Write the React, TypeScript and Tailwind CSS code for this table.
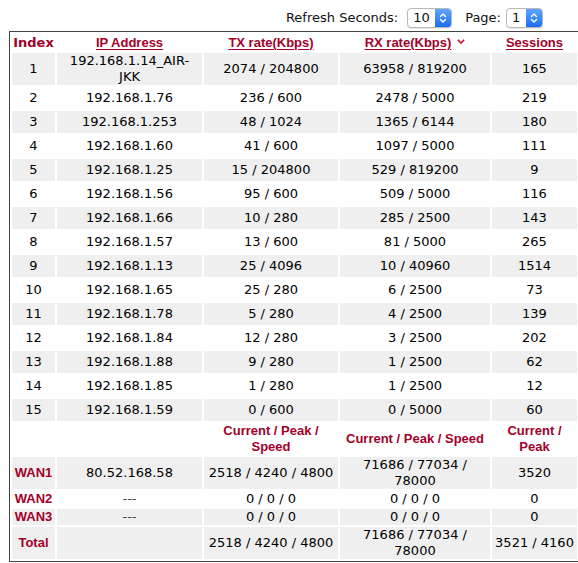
import React from "react";

const RED = "text-[#a3002a]";

const rows: [number, React.ReactNode, string, string, string][] = [
  [1, <>192.168.1.14_AIR-<br />JKK</>, "2074 / 204800", "63958 / 819200", "165"],
  [2, "192.168.1.76", "236 / 600", "2478 / 5000", "219"],
  [3, "192.168.1.253", "48 / 1024", "1365 / 6144", "180"],
  [4, "192.168.1.60", "41 / 600", "1097 / 5000", "111"],
  [5, "192.168.1.25", "15 / 204800", "529 / 819200", "9"],
  [6, "192.168.1.56", "95 / 600", "509 / 5000", "116"],
  [7, "192.168.1.66", "10 / 280", "285 / 2500", "143"],
  [8, "192.168.1.57", "13 / 600", "81 / 5000", "265"],
  [9, "192.168.1.13", "25 / 4096", "10 / 40960", "1514"],
  [10, "192.168.1.65", "25 / 280", "6 / 2500", "73"],
  [11, "192.168.1.78", "5 / 280", "4 / 2500", "139"],
  [12, "192.168.1.84", "12 / 280", "3 / 2500", "202"],
  [13, "192.168.1.88", "9 / 280", "1 / 2500", "62"],
  [14, "192.168.1.85", "1 / 280", "1 / 2500", "12"],
  [15, "192.168.1.59", "0 / 600", "0 / 5000", "60"],
];

function Select({ value, width }: { value: string; width: string }) {
  return (
    <div
      className={`flex h-[20px] ${width} rounded-[4px] border border-[#b9b9b9] bg-white shadow-[0_1px_1px_rgba(0,0,0,0.08)] overflow-hidden`}
    >
      <div className="flex-1 pl-[5px] text-[13px] leading-[18px] text-[#111]">{value}</div>
      <div className="flex w-[16px] items-center justify-center bg-gradient-to-b from-[#5fa6fc] to-[#1b6cf0]">
        <svg width="8" height="12" viewBox="0 0 8 12" fill="none">
          <path d="M1.5 4.5 L4 2 L6.5 4.5" stroke="white" strokeWidth="1.4" strokeLinecap="round" strokeLinejoin="round" />
          <path d="M1.5 7.5 L4 10 L6.5 7.5" stroke="white" strokeWidth="1.4" strokeLinecap="round" strokeLinejoin="round" />
        </svg>
      </div>
    </div>
  );
}

const linkCls = `font-['Liberation_Sans',Arial,sans-serif] font-bold text-[13px] ${RED} underline underline-offset-[2px] decoration-[1px]`;
const redBold = `font-['Liberation_Sans',Arial,sans-serif] font-bold text-[13px] ${RED}`;

export default function App() {
  return (
    <div className="w-[578px] h-[563px] overflow-hidden bg-white font-['DejaVu_Sans',Verdana,sans-serif] text-[13px] text-black">
      <div className="flex h-[31px] items-start justify-end pr-[35px] pt-[8px]">
        <div className="flex h-[20px] items-center">
          <span className="text-[13px] text-[#111]">Refresh Seconds:</span>
          <div className="ml-[9px]">
            <Select value="10" width="w-[45px]" />
          </div>
          <span className="ml-[13px] text-[13px] text-[#111]">Page:</span>
          <div className="ml-[5px]">
            <Select value="1" width="w-[37px]" />
          </div>
        </div>
      </div>
      <table className="ml-[9px] w-[571px] table-fixed border-separate border-spacing-[2px] border border-[#444] leading-[16px]">
        <thead>
          <tr className="h-[17px]">
            <th className={`w-[43px] p-0 font-['DejaVu_Sans',Verdana,sans-serif] font-bold text-[13px] ${RED}`}>Index</th>
            <th className="w-[145px] p-0"><span className={linkCls}>IP Address</span></th>
            <th className="w-[134px] p-0"><span className={linkCls}>TX rate(Kbps)</span></th>
            <th className="w-[150px] p-0">
              <span className={linkCls}>RX rate(Kbps)</span>
              <svg className="ml-[6px] inline-block align-[3px]" width="8" height="5" viewBox="0 0 8 5">
                <path d="M0.8 0.8 L4 4 L7.2 0.8" stroke="#d0002f" strokeWidth="1.6" fill="none" />
              </svg>
            </th>
            <th className="w-[85px] p-0"><span className={linkCls}>Sessions</span></th>
          </tr>
        </thead>
        <tbody>
          {rows.map(([i, ip, tx, rx, s]) => (
            <tr key={i} className={i % 2 === 1 ? "bg-[#efefef]" : "bg-white"}>
              <td className="h-[22px] p-0 text-center align-middle">{i}</td>
              <td className="h-[22px] p-0 text-center align-middle">{ip}</td>
              <td className="h-[22px] p-0 text-center align-middle">{tx}</td>
              <td className="h-[22px] p-0 text-center align-middle">{rx}</td>
              <td className="h-[22px] p-0 text-center align-middle">{s}</td>
            </tr>
          ))}
          <tr className="bg-white">
            <td className="p-0"></td>
            <td className="p-0"></td>
            <td className={`p-0 text-center align-middle ${redBold}`}>Current / Peak /<br />Speed</td>
            <td className={`p-0 text-center align-middle ${redBold}`}>Current / Peak / Speed</td>
            <td className={`p-0 text-center align-middle ${redBold}`}>Current /<br />Peak</td>
          </tr>
          <tr className="bg-[#efefef]">
            <td className={`p-0 text-center align-middle ${redBold}`}>WAN1</td>
            <td className="p-0 text-center align-middle">80.52.168.58</td>
            <td className="p-0 text-center align-middle">2518 / 4240 / 4800</td>
            <td className="p-0 text-center align-middle">71686 / 77034 /<br />78000</td>
            <td className="p-0 text-center align-middle">3520</td>
          </tr>
          <tr className="bg-white">
            <td className={`p-0 text-center align-middle ${redBold}`}>WAN2</td>
            <td className="p-0 text-center align-middle text-[#444]">---</td>
            <td className="p-0 text-center align-middle">0 / 0 / 0</td>
            <td className="p-0 text-center align-middle">0 / 0 / 0</td>
            <td className="p-0 text-center align-middle">0</td>
          </tr>
          <tr className="bg-[#efefef]">
            <td className={`p-0 text-center align-middle ${redBold}`}>WAN3</td>
            <td className="p-0 text-center align-middle text-[#444]">---</td>
            <td className="p-0 text-center align-middle">0 / 0 / 0</td>
            <td className="p-0 text-center align-middle">0 / 0 / 0</td>
            <td className="p-0 text-center align-middle">0</td>
          </tr>
          <tr className="bg-[#efefef]">
            <td className={`p-0 text-center align-middle ${redBold}`}>Total</td>
            <td className="p-0"></td>
            <td className="p-0 text-center align-middle">2518 / 4240 / 4800</td>
            <td className="p-0 text-center align-middle">71686 / 77034 /<br />78000</td>
            <td className="p-0 text-center align-middle">3521 / 4160</td>
          </tr>
        </tbody>
      </table>
    </div>
  );
}
